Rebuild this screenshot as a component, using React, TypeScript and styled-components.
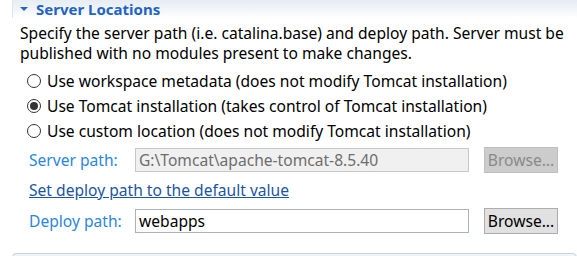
import React from 'react';
import styled, { createGlobalStyle } from 'styled-components';

const GlobalStyle = createGlobalStyle`
  html, body {
    margin: 0;
    padding: 0;
    background: #ffffff;
  }
  body {
    font-family: "Noto Sans", "Liberation Sans", sans-serif;
    font-size: 15.6px;
    color: #000000;
  }
`;

const Page = styled.div`
  width: 577px;
  height: 256px;
  overflow: hidden;
  background: #ffffff;
`;

const Section = styled.section`
  margin-left: 12px;
`;

const Header = styled.div`
  height: 18px;
  display: flex;
  align-items: center;
  gap: 8px;
  padding-left: 7px;
  border-left: 1px solid #dde3ea;
  background: linear-gradient(to bottom, #e6ecf3 0%, #f4f7fa 60%, #ffffff 100%);
`;

const Triangle = styled.span`
  width: 0;
  height: 0;
  border-left: 4px solid transparent;
  border-right: 4px solid transparent;
  border-top: 4px solid #2263c6;
`;

const Title = styled.span`
  font-weight: bold;
  font-size: 15px;
  line-height: 18px;
  color: #2263c6;
`;

const Body = styled.div`
  padding-left: 8px;
  padding-top: 5px;
`;

const Description = styled.p`
  margin: 0;
  line-height: 20px;
  width: 548px;
`;

const RadioGroup = styled.div`
  margin-top: 5px;
  padding-left: 7px;
`;

const RadioRow = styled.label`
  display: flex;
  align-items: center;
  height: 25px;
  gap: 6px;
`;

const RadioCircle = styled.span<{ checked?: boolean }>`
  box-sizing: border-box;
  width: 14px;
  height: 14px;
  border-radius: 50%;
  border: 1px solid #333333;
  background: #ffffff;
  display: flex;
  align-items: center;
  justify-content: center;
  &::after {
    content: '';
    width: 8px;
    height: 8px;
    border-radius: 50%;
    background: ${p => (p.checked ? '#333333' : 'transparent')};
  }
`;

const FieldRow = styled.div<{ top: number }>`
  display: grid;
  grid-template-columns: 91px 334px 74px;
  column-gap: 15px;
  align-items: center;
  margin-top: ${p => p.top}px;
  padding-left: 9px;
  height: 26px;
`;

const Label = styled.span`
  color: #2a86e0;
  line-height: 20px;
  white-space: nowrap;
`;

const Input = styled.div<{ disabled?: boolean }>`
  box-sizing: border-box;
  height: 24px;
  padding-left: 3px;
  display: flex;
  align-items: center;
  border: 1px solid ${p => (p.disabled ? '#c7c7c7' : '#a9b3bf')};
  background: ${p => (p.disabled ? '#f0f0f0' : '#ffffff')};
  color: ${p => (p.disabled ? '#6d6d6d' : '#000000')};
  white-space: nowrap;
`;

const Button = styled.div<{ disabled?: boolean }>`
  box-sizing: border-box;
  height: 26px;
  display: flex;
  align-items: center;
  justify-content: center;
  border: 1px solid ${p => (p.disabled ? '#bfbfbf' : '#adadad')};
  background: ${p => (p.disabled ? '#cccccc' : '#e1e1e1')};
  color: ${p => (p.disabled ? '#8a8a8a' : '#000000')};
`;

const Link = styled.a`
  display: block;
  margin-top: 7px;
  margin-left: 9px;
  line-height: 20px;
  color: #1a55a3;
  text-decoration: underline;
  cursor: pointer;
`;

const NextSection = styled.div`
  margin: 19px 0 0 12px;
  height: 20px;
  border: 1px solid #c9d3de;
  border-radius: 4px 4px 0 0;
  background: #eef3f8;
`;

const options = [
  { text: 'Use workspace metadata (does not modify Tomcat installation)', checked: false },
  { text: 'Use Tomcat installation (takes control of Tomcat installation)', checked: true },
  { text: 'Use custom location (does not modify Tomcat installation)', checked: false },
];

export default function App() {
  return (
    <Page>
      <GlobalStyle />
      <Section>
        <Header>
          <Triangle />
          <Title>Server Locations</Title>
        </Header>
        <Body>
          <Description>
            Specify the server path (i.e. catalina.base) and deploy path. Server must be
            published with no modules present to make changes.
          </Description>
          <RadioGroup>
            {options.map(o => (
              <RadioRow key={o.text}>
                <RadioCircle checked={o.checked} />
                {o.text}
              </RadioRow>
            ))}
          </RadioGroup>
          <FieldRow top={4}>
            <Label>Server path:</Label>
            <Input disabled>G:\Tomcat\apache-tomcat-8.5.40</Input>
            <Button disabled>Browse...</Button>
          </FieldRow>
          <Link>Set deploy path to the default value</Link>
          <FieldRow top={8}>
            <Label>Deploy path:</Label>
            <Input>webapps</Input>
            <Button>Browse...</Button>
          </FieldRow>
        </Body>
      </Section>
      <NextSection />
    </Page>
  );
}
